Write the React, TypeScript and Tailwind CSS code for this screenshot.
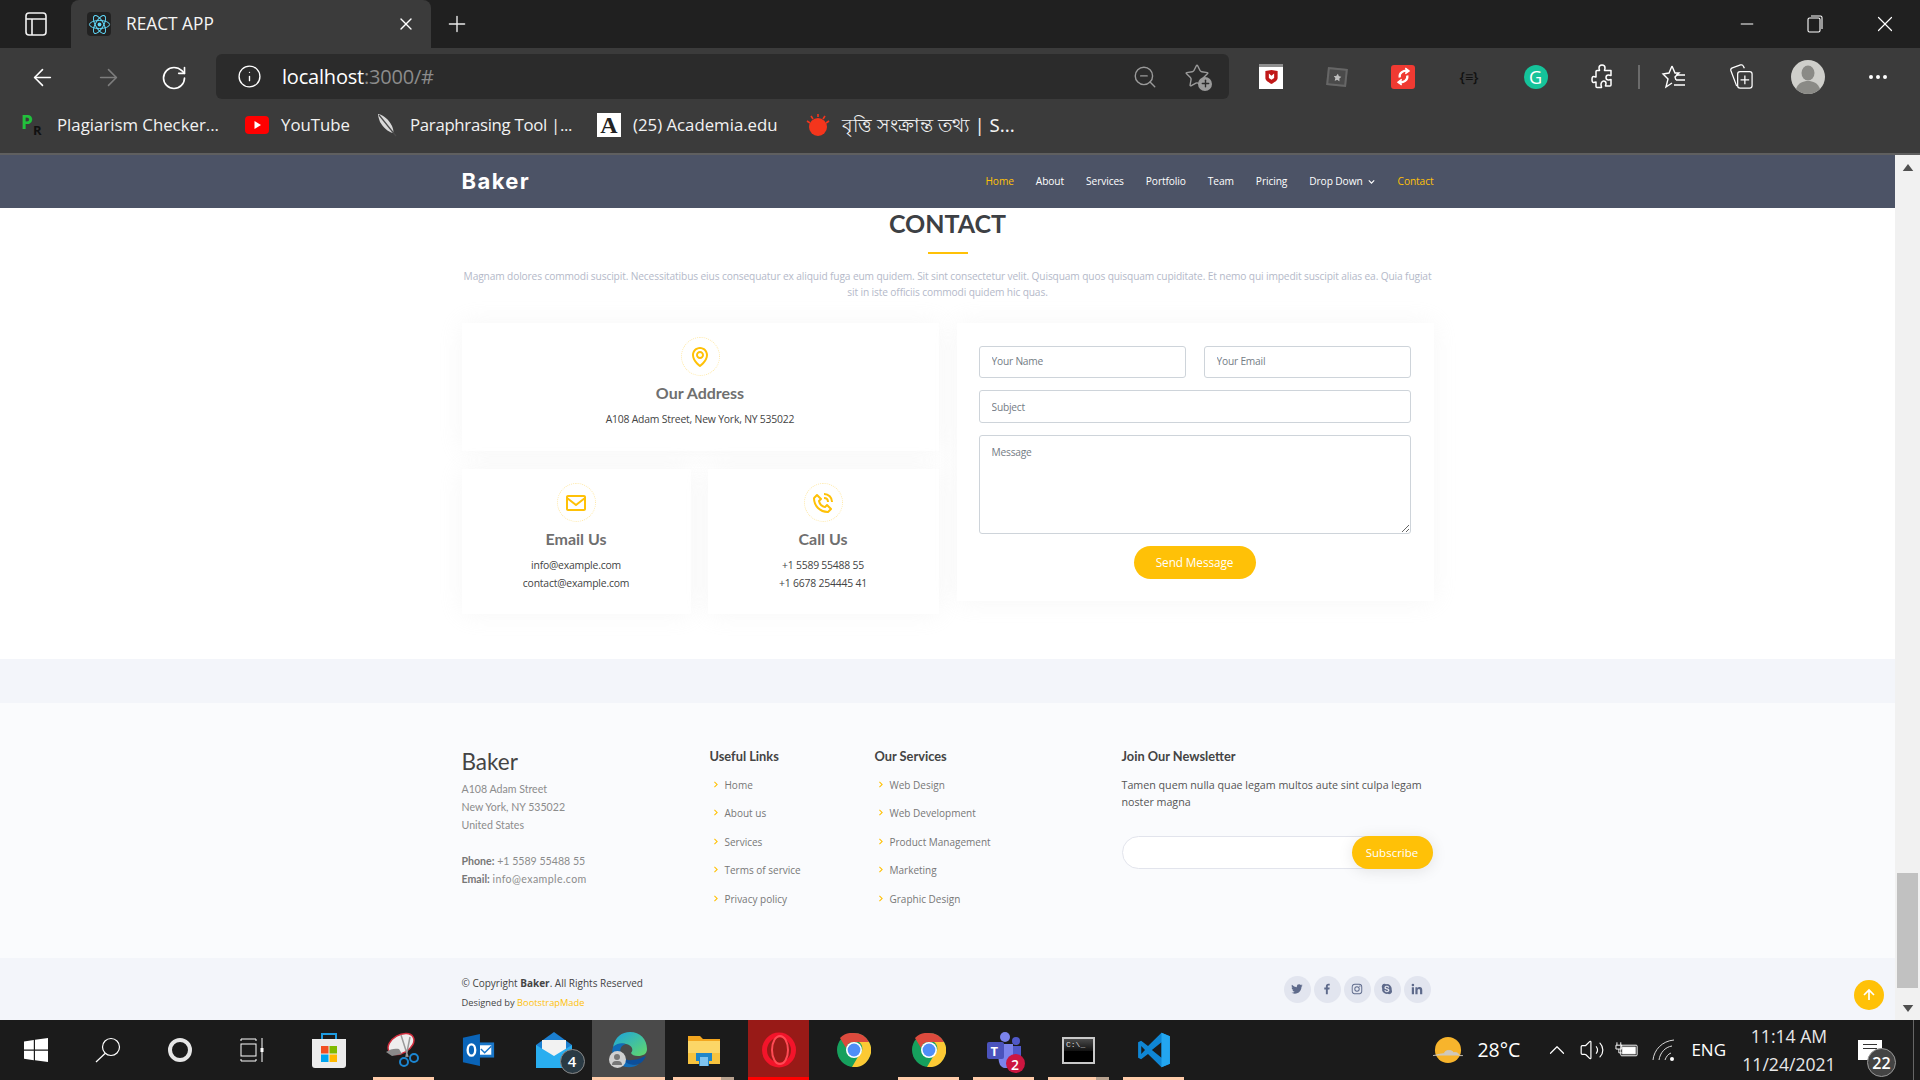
import {
  ArrowLeft,
  ArrowRight,
  ChevronUp,
  Ellipsis,
  Info,
  Minus,
  Plus,
  RotateCw,
  Star,
  Volume2,
  X,
  ZoomOut,
} from "lucide-react";
import {
  BiChevronDown,
  BiChevronRight,
  BiEnvelope,
  BiLogoFacebook,
  BiLogoInstagram,
  BiLogoLinkedin,
  BiLogoSkype,
  BiLogoTwitter,
  BiMap,
  BiPhoneCall,
  BiUpArrowAlt,
} from "react-icons/bi";
import type { ReactNode } from "react";

const navLinks = ["About", "Services", "Portfolio", "Team", "Pricing"];
const usefulLinks = ["Home", "About us", "Services", "Terms of service", "Privacy policy"];
const serviceLinks = ["Web Design", "Web Development", "Product Management", "Marketing", "Graphic Design"];

function ReactLogo() {
  return (
    <span className="grid h-[24px] w-[24px] place-items-center rounded-sm bg-[#222222]">
      <svg viewBox="-12 -12 24 24" className="h-[23px] w-[23px]" fill="none" stroke="#61dafb" strokeWidth="1">
        <circle r="2" fill="#61dafb" stroke="none" />
        <ellipse rx="10.5" ry="4.2" />
        <ellipse rx="10.5" ry="4.2" transform="rotate(60)" />
        <ellipse rx="10.5" ry="4.2" transform="rotate(120)" />
      </svg>
    </span>
  );
}

function TabStrip() {
  return (
    <div className="flex h-[48px] shrink-0 items-stretch bg-[#202020] text-white">
      <div className="grid w-[71px] place-items-center">
        <svg viewBox="0 0 22 24" className="h-[24px] w-[22px]" fill="none" stroke="#f2f2f2" strokeWidth="1.6">
          <rect x="1" y="1" width="20" height="22" rx="3" />
          <path d="M1 7h20M7 7v16" />
        </svg>
      </div>
      <div className="flex w-[360px] items-center rounded-t-lg bg-[#3b3b3b] pl-[16px] pr-[15px]">
        <ReactLogo />
        <span className="ml-[15px] text-[17.300px] text-[#f5f5f5]">REACT APP</span>
        <X className="ml-auto h-[20px] w-[20px]" strokeWidth={1.6} />
      </div>
      <div className="grid w-[52px] place-items-center">
        <Plus className="h-[26px] w-[26px] text-[#e8e8e8]" strokeWidth={1.3} />
      </div>
      <div className="ml-auto flex items-center pr-[22px]">
        <Minus className="mr-[50px] h-[20px] w-[20px]" strokeWidth={1.2} />
        <svg viewBox="0 0 16 18" className="mr-[49px] h-[18px] w-[16px]" fill="none" stroke="#fff" strokeWidth="1.1">
          <rect x="1" y="3" width="12" height="14" rx="1.5" />
          <path d="M4 1h9.5A1.5 1.5 0 0 1 15 2.500V14" />
        </svg>
        <X className="h-[26px] w-[26px]" strokeWidth={1.1} />
      </div>
    </div>
  );
}

function McAfeeIcon() {
  return (
    <span className="flex h-[25px] w-[24px] flex-col items-center bg-white">
      <span className="h-[3px] w-full bg-[#8e8e8e]" />
      <svg viewBox="0 0 14 16" className="mt-[3px] h-[14px] w-[13px]">
        <path d="M0 1l7-1 7 1v8c0 3-4 5-7 7-3-2-7-4-7-7z" fill="#c01818" />
        <path d="M4 4l3 2.500 3-2.500v5l-3 2-3-2z" fill="#fff" />
      </svg>
    </span>
  );
}

function RedSyncIcon() {
  return (
    <span className="grid h-[24px] w-[24px] place-items-center rounded-[3px] bg-[#f03a32]">
      <svg viewBox="0 0 16 20" className="h-[19px] w-[15px]" fill="none" stroke="#fff" strokeWidth="2.4">
        <path d="M13 4C8 3 3 6 4 11" />
        <path d="M3 16c5 1 10-2 9-7" />
        <path d="M10 1l4 3-4 3M6 19l-4-3 4-3" strokeWidth="1.4" fill="#fff" />
      </svg>
    </span>
  );
}

function PuzzleIcon() {
  return (
    <svg viewBox="0 0 22 26" className="h-[26px] w-[22px]" fill="none" stroke="#fff" strokeWidth="1.5" strokeLinejoin="round">
      <path d="M11 1c2 0 3 1.500 3 3 0 1-.5 1.500-.5 2.500H20v5c-1 0-1.500-.5-2.500-.5-1.500 0-2.500 1.200-2.500 2.500s1 2.500 2.500 2.500c1 0 1.500-.5 2.500-.5v5.500c0 .6-.4 1-1 1h-4.500c0-1 .5-1.500.5-2.500 0-1.500-1.200-2.500-2.500-2.500S10 19 10 20.500c0 1 .5 2 .5 3H6c-.6 0-1-.4-1-1v-4.500c-1 0-1.500.5-2.500.5C1.500 18.500 1 17 1 15.500S1.500 12.500 2.500 12.500c1 0 1.500.5 2.500.5V7.500c0-.6.4-1 1-1h2.500C8.500 5.500 8 5 8 4c0-1.500 1-3 3-3z" />
    </svg>
  );
}

function FavouritesIcon() {
  return (
    <svg viewBox="0 0 26 26" className="h-[26px] w-[26px]" fill="none" stroke="#fff" strokeWidth="1.4">
      <path d="M11 2l3 7h4l-4 4 1 3M11 2L8 9l-6 1 5 5-2 8 6-4" />
      <path d="M15 11h9M15 16h9M13 21h11" />
    </svg>
  );
}

function CollectionsIcon() {
  return (
    <svg viewBox="0 0 26 28" className="h-[27px] w-[25px]" fill="none" stroke="#fff" strokeWidth="1.3">
      <path d="M8 24L2 8c-.5-1.500 0-2.500 1.500-3L12 2c1.500-.5 2.500 0 3 1.500l1 2" />
      <rect x="9" y="9" width="15" height="17" rx="2.500" />
      <path d="M16.500 13v9M12 17.500h9" />
    </svg>
  );
}

function Avatar() {
  return (
    <svg viewBox="0 0 34 34" className="h-[34px] w-[34px]">
      <circle cx="17" cy="17" r="17" fill="#cfcfcb" />
      <ellipse cx="17" cy="13" rx="6.500" ry="7.500" fill="#8a8a86" />
      <path d="M5 29c2-6 7-8 12-8s10 2 12 8a17 17 0 0 1-24 0z" fill="#8a8a86" />
    </svg>
  );
}

function Toolbar() {
  return (
    <div className="flex h-[57px] shrink-0 items-start bg-[#3b3b3b] text-white">
      <div className="ml-[9px] flex h-[57px] items-start pt-[16px]">
        <div className="grid w-[66px] place-items-center">
          <ArrowLeft className="h-[27px] w-[27px]" strokeWidth={1.4} />
        </div>
        <div className="grid w-[66px] place-items-center">
          <ArrowRight className="h-[27px] w-[27px] text-[#7d7d7d]" strokeWidth={1.4} />
        </div>
        <div className="grid w-[66px] place-items-center">
          <RotateCw className="h-[28px] w-[28px]" strokeWidth={1.4} />
        </div>
      </div>
      <div className="ml-[9px] mt-[6px] flex h-[45px] w-[1013px] items-center rounded-md bg-[#2b2b2b] pl-[21px] pr-[17px]">
        <Info className="h-[25px] w-[25px]" strokeWidth={1.3} />
        <span className="ml-[20px] text-[20px] tracking-[-0.2px]">
          localhost<span className="text-[#8c8c8c]">:3000/#</span>
        </span>
        <ZoomOut className="ml-auto h-[26px] w-[26px] text-[#9a9a9a]" strokeWidth={1.3} />
        <span className="relative ml-[26px] h-[28px] w-[28px] text-[#9a9a9a]">
          <Star className="h-[26px] w-[26px]" strokeWidth={1.3} />
          <span className="absolute bottom-0 right-0 grid h-[14px] w-[14px] place-items-center rounded-full bg-[#9a9a9a]">
            <Plus className="h-[11px] w-[11px] text-[#2b2b2b]" strokeWidth={3} />
          </span>
        </span>
      </div>
      <div className="ml-[9px] flex h-[57px] items-center">
        <div className="grid w-[66px] place-items-center">
          <McAfeeIcon />
        </div>
        <div className="grid w-[66px] place-items-center">
          <span className="grid h-[18px] w-[20px] rotate-6 place-items-center border-2 border-[#666666] bg-[#4a4a4a] text-[#bdbdbd]">
            <Star className="h-[9px] w-[9px]" fill="currentColor" strokeWidth={0} />
          </span>
        </div>
        <div className="grid w-[66px] place-items-center">
          <RedSyncIcon />
        </div>
        <div className="grid w-[66px] place-items-center">
          <span className="text-[14px] font-semibold text-[#111111]">{"{≡}"}</span>
        </div>
        <div className="grid w-[67px] place-items-center">
          <span className="grid h-[24px] w-[24px] place-items-center rounded-full bg-[#15c39a] text-[18px] leading-none text-white">
            G
          </span>
        </div>
        <div className="grid w-[66px] place-items-center">
          <PuzzleIcon />
        </div>
        <div className="ml-[3px] h-[24px] w-[2px] bg-[#6b6b6b]" />
        <div className="grid w-[68px] place-items-center">
          <FavouritesIcon />
        </div>
        <div className="grid w-[66px] place-items-center">
          <CollectionsIcon />
        </div>
        <div className="grid w-[68px] place-items-center">
          <Avatar />
        </div>
        <div className="grid w-[72px] place-items-center">
          <Ellipsis className="h-[24px] w-[24px]" strokeWidth={2} />
        </div>
      </div>
    </div>
  );
}

function Bookmarks() {
  return (
    <div className="flex h-[48px] shrink-0 items-center bg-[#3b3b3b] pb-[8px] text-[16.800px] text-[#f2f2f2]">
      <span className="ml-[21px] flex h-[24px] w-[24px] items-end font-bold">
        <span className="self-start text-[19px] leading-[18px] text-[#22c03c]">P</span>
        <span className="text-[13px] leading-[13px] text-[#111111]">R</span>
      </span>
      <span className="ml-[12px] w-[188px] whitespace-nowrap">Plagiarism Checker...</span>
      <svg viewBox="0 0 24 18" className="h-[18px] w-[24px]">
        <rect width="24" height="18" rx="4" fill="#f00" />
        <path d="M9.500 5l6.500 4-6.500 4z" fill="#fff" />
      </svg>
      <span className="ml-[12px] w-[95px] whitespace-nowrap">YouTube</span>
      <svg viewBox="0 0 22 24" className="h-[24px] w-[22px]">
        <path d="M2 1c6 1 11 6 14 12 1 3 2 5 1 7-5-1-10-6-13-11C3 6 2 3 2 1z" fill="#d9d9d9" />
        <path d="M3 2l17 21" stroke="#4a4a4a" strokeWidth="1.200" />
      </svg>
      <span className="ml-[12px] w-[187px] whitespace-nowrap tracking-[-0.3px]">Paraphrasing Tool |...</span>
      <span className="grid h-[24px] w-[24px] place-items-center bg-white font-['Liberation_Serif',serif] text-[24px] font-bold leading-none text-[#222222]">
        A
      </span>
      <span className="ml-[12px] w-[173px] whitespace-nowrap">(25) Academia.edu</span>
      <svg viewBox="0 0 24 24" className="h-[24px] w-[24px]">
        <circle cx="12" cy="14" r="9" fill="#f4351c" />
        <path d="M12 1v3M5 3l2 3M19 3l-2 3M1 8l3 2M23 8l-3 2" stroke="#f4351c" strokeWidth="1.6" />
      </svg>
      <span className="ml-[12px] whitespace-nowrap font-['Noto_Sans','Noto_Sans_CJK_SC',sans-serif] text-[18.600px]">
        বৃত্তি সংক্রান্ত তথ্য | S...
      </span>
    </div>
  );
}

function ContactCard({
  icon,
  title,
  lines,
  className,
}: {
  icon: ReactNode;
  title: string;
  lines: string[];
  className: string;
}) {
  return (
    <div className={`flex flex-col items-center bg-white pt-[14px] shadow-[0_0_24px_0_rgba(214,215,216,0.2)] ${className}`}>
      <span className="grid h-[39px] w-[39px] place-items-center rounded-full border border-dotted border-[#ffe9a8] text-[24px] text-[#ffc107]">
        {icon}
      </span>
      <h3 className="mt-[7px] font-['Lato',sans-serif] text-[16px] font-bold leading-[20px] text-[#6f6f6f]">{title}</h3>
      <div className="mt-[7px] text-[10.400px] leading-[18px] tracking-[-0.2px] text-[#444444]">
        {lines.map((line) => (
          <p key={line} className="text-center">
            {line}
          </p>
        ))}
      </div>
    </div>
  );
}

function ContactSection() {
  const fieldClass =
    "w-full rounded-[3px] border border-[#ced4da] bg-white px-[12px] text-[10.200px] tracking-[-0.2px] text-[#444444] outline-none placeholder:text-[#747c85]";

  return (
    <section className="h-[451px] shrink-0 bg-white">
      <div className="mx-auto w-[972px]">
        <h2 className="text-center font-['Lato',sans-serif] text-[25px] font-bold leading-[31px] text-[#3d4044]">CONTACT</h2>
        <div className="mx-auto mt-[13px] h-[2px] w-[40px] bg-[#ffc107]" />
        <p className="mt-[14px] text-center text-[10.200px] leading-[16px] tracking-[-0.13px] text-[#b4b9c9]">
          Magnam dolores commodi suscipit. Necessitatibus eius consequatur ex aliquid fuga eum quidem. Sit sint consectetur
          velit. Quisquam quos quisquam cupiditate. Et nemo qui impedit suscipit alias ea. Quia fugiat sit in iste officiis
          commodi quidem hic quas.
        </p>
        <div className="mt-[23px] grid grid-cols-[477px_477px] gap-[18px]">
          <div className="flex flex-col gap-[18px]">
            <ContactCard
              icon={<BiMap />}
              title="Our Address"
              lines={["A108 Adam Street, New York, NY 535022"]}
              className="h-[128px]"
            />
            <div className="grid grid-cols-[229px_231px] gap-[17px]">
              <ContactCard
                icon={<BiEnvelope />}
                title="Email Us"
                lines={["info@example.com", "contact@example.com"]}
                className="h-[145px]"
              />
              <ContactCard
                icon={<BiPhoneCall />}
                title="Call Us"
                lines={["+1 5589 55488 55", "+1 6678 254445 41"]}
                className="h-[145px]"
              />
            </div>
          </div>
          <form className="flex h-[278px] flex-col gap-[12px] bg-white pl-[22px] pr-[23px] pt-[23px] shadow-[0_0_24px_0_rgba(214,215,216,0.2)]">
            <div className="grid grid-cols-[207px_207px] gap-[18px]">
              <input className={`${fieldClass} h-[32px] pb-[2px]`} placeholder="Your Name" />
              <input className={`${fieldClass} h-[32px] pb-[2px]`} placeholder="Your Email" />
            </div>
            <input className={`${fieldClass} h-[33px]`} placeholder="Subject" />
            <textarea className={`${fieldClass} h-[99px] py-[9px]`} placeholder="Message" />
            <button
              type="button"
              className="mx-auto h-[33px] w-[122px] rounded-full bg-[#ffc107] text-[11.800px] tracking-[-0.1px] text-white"
            >
              Send Message
            </button>
          </form>
        </div>
      </div>
    </section>
  );
}

function LinkColumn({ title, links }: { title: string; links: string[] }) {
  return (
    <div>
      <h4 className="font-['Lato',sans-serif] text-[12.800px] font-bold leading-[16px] text-[#444444]">{title}</h4>
      <ul className="mt-[7px]">
        {links.map((link) => (
          <li key={link} className="flex h-[28.500px] items-center text-[10px] text-[#777777]">
            <BiChevronRight className="-ml-[1px] -mt-[2px] mr-[3px] h-[13px] w-[13px] text-[#ffc107]" />
            {link}
          </li>
        ))}
      </ul>
    </div>
  );
}

function Footer() {
  return (
    <footer className="shrink-0">
      <div className="h-[44px] bg-[#f3f5fa]" />
      <div className="h-[255px] bg-[#fafbfd] pt-[45px]">
        <div className="mx-auto grid w-[972px] grid-cols-[248px_165px_247px_312px]">
          <div>
            <h3 className="font-['Lato',sans-serif] text-[22.500px] font-normal leading-[28px] text-[#444444]">Baker</h3>
            <div className="mt-[4px] font-['Lato',sans-serif] text-[10.600px] leading-[18px] text-[#8c8c8c]">
              <p>A108 Adam Street</p>
              <p>New York, NY 535022</p>
              <p>United States</p>
              <p className="mt-[18px]">
                <strong className="font-bold text-[#777777]">Phone:</strong> +1 5589 55488 55
              </p>
              <p>
                <strong className="font-bold text-[#777777]">Email:</strong>{" "}
                <span className="tracking-[0.4px]">info@example.com</span>
              </p>
            </div>
          </div>
          <LinkColumn title="Useful Links" links={usefulLinks} />
          <LinkColumn title="Our Services" links={serviceLinks} />
          <div>
            <h4 className="font-['Lato',sans-serif] text-[12.800px] font-bold leading-[16px] text-[#444444]">
              Join Our Newsletter
            </h4>
            <p className="mt-[13px] w-[310px] text-[10.700px] leading-[17px] text-[#555555]">
              Tamen quem nulla quae legam multos aute sint culpa legam noster magna
            </p>
            <div className="relative mt-[25px] h-[33px] w-[311px] rounded-full border border-[#e2e4ec] bg-white">
              <button
                type="button"
                className="absolute -right-px -top-px h-[33px] w-[81px] rounded-full bg-[#ffc107] text-[11.500px] text-white shadow-[0_2px_15px_rgba(0,0,0,0.1)]"
              >
                Subscribe
              </button>
            </div>
          </div>
        </div>
      </div>
      <div className="h-[62px] bg-[#f3f5fa]">
        <div className="mx-auto flex h-full w-[972px] items-center justify-between">
          <div className="pt-[8px] text-[#444444]">
            <p className="text-[10px] leading-[16px]">
              © Copyright <strong className="font-bold">Baker</strong>. All Rights Reserved
            </p>
            <p className="mt-[4px] text-[9.300px] leading-[16px]">
              Designed by <span className="text-[#ffc107]">BootstrapMade</span>
            </p>
          </div>
          <div className="mr-[3px] flex gap-[3px]">
            {[BiLogoTwitter, BiLogoFacebook, BiLogoInstagram, BiLogoSkype, BiLogoLinkedin].map((Icon, index) => (
              <span key={index} className="grid h-[27px] w-[27px] place-items-center rounded-full bg-[#e2e5ef] text-[14px] text-[#5e6a8b]">
                <Icon />
              </span>
            ))}
          </div>
        </div>
      </div>
    </footer>
  );
}

function PageScrollbar() {
  return (
    <div className="flex w-[25px] shrink-0 flex-col items-center bg-[#f1f1f1]">
      <svg viewBox="0 0 12 8" className="mt-[9px] h-[7px] w-[12px]">
        <path d="M6 0l6 8H0z" fill="#505050" />
      </svg>
      <div className="mt-auto h-[115px] w-[21px] bg-[#c1c1c1]" />
      <svg viewBox="0 0 12 8" className="mb-[8px] mt-[17px] h-[7px] w-[12px]">
        <path d="M0 0h12L6 8z" fill="#505050" />
      </svg>
    </div>
  );
}

function Page() {
  return (
    <div className="relative flex min-h-0 flex-1 overflow-hidden">
      <div className="flex min-w-0 flex-1 flex-col">
        <nav className="h-[53px] shrink-0 bg-[#4c5366]">
          <div className="mx-auto flex h-full w-[972px] items-center justify-between text-white">
            <span className="font-['Inter',sans-serif] text-[22px] font-bold tracking-[1.4px]">Baker</span>
            <ul className="flex items-center gap-[22px] text-[10.200px] tracking-[-0.1px]">
              <li className="text-[#ffc107]">Home</li>
              {navLinks.map((link) => (
                <li key={link}>{link}</li>
              ))}
              <li className="flex items-center">
                Drop Down
                <BiChevronDown className="ml-[2px] h-[13px] w-[13px]" />
              </li>
              <li className="-ml-[2px] text-[#ffc107]">Contact</li>
            </ul>
          </div>
        </nav>
        <ContactSection />
        <Footer />
      </div>
      <PageScrollbar />
      <button
        type="button"
        className="absolute bottom-[10px] right-[36px] grid h-[30px] w-[30px] place-items-center rounded-full bg-[#ffc107] text-[20px] text-white"
      >
        <BiUpArrowAlt />
      </button>
    </div>
  );
}

function ChromeIcon() {
  return (
    <svg viewBox="0 0 34 34" className="h-[34px] w-[34px]">
      <circle cx="17" cy="17" r="17" fill="#16a05d" />
      <path d="M17 0a17 17 0 0 1 15 9H17a8 8 0 0 0-8 6L3 5a17 17 0 0 1 14-5z" fill="#dc4a3d" />
      <path d="M32 9a17 17 0 0 1-17 25l7-12a8 8 0 0 0 0-13z" fill="#fcc934" />
      <circle cx="17" cy="17" r="8" fill="#fff" />
      <circle cx="17" cy="17" r="6.400" fill="#4f8ef7" />
    </svg>
  );
}

function Badge({ children, className }: { children: ReactNode; className: string }) {
  return <span className={`absolute grid place-items-center rounded-full font-semibold text-white ${className}`}>{children}</span>;
}

const peachBar = "inset-x-[7px] bg-[#ffccaa]";
const splitBar = "inset-x-[7px] bg-[linear-gradient(90deg,#ffccaa_78%,#b8a28f_78%)]";

const taskbarApps: { key: string; icon: ReactNode; bar?: string; active?: string }[] = [
  {
    key: "store",
    icon: (
      <svg viewBox="0 0 36 36" className="h-[36px] w-[36px]">
        <path d="M11 7V2h14v5" fill="none" stroke="#1e9be0" strokeWidth="2" />
        <path d="M1 7h34v26a3 3 0 0 1-3 3H4a3 3 0 0 1-3-3z" fill="#ececec" />
        <rect x="10" y="14" width="7.500" height="7.500" fill="#f25022" />
        <rect x="18.500" y="14" width="7.500" height="7.500" fill="#7fba00" />
        <rect x="10" y="22.500" width="7.500" height="7.500" fill="#00a4ef" />
        <rect x="18.500" y="22.500" width="7.500" height="7.500" fill="#ffb900" />
      </svg>
    ),
  },
  {
    key: "snip",
    bar: peachBar,
    icon: (
      <svg viewBox="0 0 36 36" className="h-[36px] w-[36px]">
        <ellipse cx="15" cy="12" rx="14" ry="9" transform="rotate(-30 15 12)" fill="#eeeeee" stroke="#d32f3f" strokeWidth="1.500" />
        <path d="M0 20c4-3 9-4 13-3l3 5-10 2z" fill="#8a8a8a" />
        <path d="M15 3l7 22M24 5l-4 20" stroke="#9a9a9a" strokeWidth="1.500" />
        <circle cx="18" cy="30" r="4" fill="none" stroke="#1c86d1" strokeWidth="2" />
        <circle cx="28" cy="26" r="4" fill="none" stroke="#1c86d1" strokeWidth="2" />
      </svg>
    ),
  },
  {
    key: "outlook",
    icon: (
      <svg viewBox="0 0 36 36" className="h-[36px] w-[34px]">
        <path d="M14 10h20v16H14z" fill="#1976c8" />
        <path d="M19 13h12v10H19z" fill="#fff" />
        <path d="M20 17l4 4 7-7" fill="none" stroke="#1976c8" strokeWidth="1.500" />
        <path d="M1 5l18-4v34L1 31z" fill="#0a64b8" />
        <ellipse cx="10" cy="18" rx="4" ry="6" fill="none" stroke="#fff" strokeWidth="2.500" />
      </svg>
    ),
  },
  {
    key: "mail",
    icon: (
      <span className="relative block h-[36px] w-[36px]">
        <svg viewBox="0 0 36 36" className="h-[36px] w-[36px]">
          <path d="M0 13L18 0l18 13v23H0z" fill="#1b7fd0" />
          <path d="M6 8h24v14L18 28 6 22z" fill="#f2f2f2" />
          <path d="M0 13l18 11 18-11v23H0z" fill="#29aef0" />
        </svg>
        <Badge className="-bottom-[6px] -right-[13px] h-[25px] w-[25px] border border-[#888888] bg-[#2a3a44] text-[15px]">4</Badge>
      </span>
    ),
  },
  {
    key: "edge",
    bar: "inset-x-px bg-[#ffccaa]",
    active: "inset-x-px bg-[#4a4a4a]",
    icon: (
      <span className="relative block h-[36px] w-[36px]">
        <svg viewBox="0 0 36 36" className="h-[36px] w-[36px]">
          <defs>
            <linearGradient id="edgeTop" x1="0" y1="0" x2="1" y2="1">
              <stop offset="0" stopColor="#1ba3e0" />
              <stop offset="1" stopColor="#63d968" />
            </linearGradient>
          </defs>
          <path d="M2 15C4 5 11 0 19 0c10 0 17 7 17 17 0 5-4 7-9 7-4 0-6-1-7-3 3-3 1-8-5-9C9 11 5 13 2 15z" fill="url(#edgeTop)" />
          <path d="M2 15c3-3 8-5 13-3-5 1-7 6-5 11 2 7 10 11 18 9-8 6-22 4-26-8-1-3-1-6 0-9z" fill="#116cb8" />
          <path d="M27 32c-6 2-14 0-17-9 3 4 7 6 11 5 6 0 10-3 14-4-2 4-4 7-8 8z" fill="#0c4f9b" />
        </svg>
        <span className="absolute -left-[2px] bottom-0 h-[17px] w-[17px] rounded-full bg-[#d0d0d0]">
          <span className="mx-auto mt-[3px] block h-[6px] w-[6px] rounded-full bg-[#777777]" />
          <span className="mx-auto mt-[1px] block h-[4px] w-[10px] rounded-t-full bg-[#777777]" />
        </span>
      </span>
    ),
  },
  {
    key: "explorer",
    bar: splitBar,
    icon: (
      <svg viewBox="0 0 34 34" className="h-[34px] w-[34px]">
        <path d="M1 3h12l3 3h17v5H1z" fill="#f3a61f" />
        <path d="M1 8h32v23H1z" fill="#fcd667" />
        <path d="M1 20h32v11H1z" fill="#f8c33e" />
        <path d="M9 20h16v8h-3v5H12v-5H9z" fill="#1f86c9" />
        <path d="M13 24h8v9h-8z" fill="#7fc4ef" />
      </svg>
    ),
  },
  {
    key: "opera",
    bar: "inset-x-[7px] bg-[#ff0000]",
    active: "inset-x-[7px] bg-[#981a17]",
    icon: (
      <svg viewBox="0 0 34 36" className="h-[36px] w-[34px]">
        <ellipse cx="17" cy="18" rx="14.500" ry="15" fill="none" stroke="#f3142a" strokeWidth="5" />
        <ellipse cx="18" cy="18" rx="8" ry="14" fill="none" stroke="#ff4b55" strokeWidth="2" />
      </svg>
    ),
  },
  { key: "chrome", icon: <ChromeIcon /> },
  { key: "chrome2", bar: peachBar, icon: <ChromeIcon /> },
  {
    key: "teams",
    bar: peachBar,
    icon: (
      <span className="relative block h-[36px] w-[36px]">
        <svg viewBox="0 0 36 36" className="h-[36px] w-[36px]">
          <circle cx="19" cy="5" r="5" fill="#7b83eb" />
          <circle cx="30" cy="9" r="4" fill="#5059c9" />
          <path d="M24 14h11v12a6 6 0 0 1-11 3z" fill="#5059c9" />
          <path d="M10 12h17v16a7 7 0 0 1-14 2z" fill="#7b83eb" />
          <rect x="1" y="10" width="17" height="17" rx="2" fill="#4b53bc" />
        </svg>
        <span className="absolute left-[5px] top-[12px] text-[13px] font-bold leading-[14px] text-white">T</span>
        <Badge className="-bottom-[5px] -right-[3px] h-[19px] w-[19px] bg-[#cc1640] text-[14px]">2</Badge>
      </span>
    ),
  },
  {
    key: "cmd",
    bar: splitBar,
    icon: (
      <span className="block h-[27px] w-[33px] overflow-hidden border-2 border-[#c9c9c9] bg-black">
        <span className="block h-[12px] bg-[linear-gradient(#4a4a4a,#111111)] pl-[2px] font-['Liberation_Mono',monospace] text-[8px] leading-[12px] text-[#dddddd]">
          C:\_
        </span>
      </span>
    ),
  },
  {
    key: "vscode",
    bar: peachBar,
    icon: (
      <svg viewBox="0 0 24 24" className="h-[36px] w-[36px]">
        <path fillRule="evenodd" d="M17 .5L8 9.300 3.400 5.800 1.400 6.800v10.400l2 1L8 14.700l9 8.800 5.600-2.300V2.800zM17 6.800v10.400L10.600 12zM3.500 9.300L6 12l-2.500 2.700z" fill="#0f86d4" />
        <path d="M17 .5l5.600 2.300v18.400L17 23.500z" fill="#23a6f0" />
      </svg>
    ),
  },
];

function Taskbar() {
  return (
    <div className="flex h-[60px] shrink-0 items-stretch bg-[#1b1b1b] text-white">
      <div className="grid w-[72px] place-items-center">
        <svg viewBox="0 0 24 24" className="h-[24px] w-[24px]" fill="#fff">
          <path d="M0 3.400l9.800-1.400v9.500H0zM11 1.800L24 0v11.500H11zM0 12.700h9.800v9.500L0 20.800zM11 12.700h13V24l-13-1.800z" />
        </svg>
      </div>
      <div className="grid w-[72px] place-items-center">
        <svg viewBox="0 0 26 26" className="h-[26px] w-[26px]" fill="none" stroke="#fff" strokeWidth="1.200">
          <circle cx="16" cy="10" r="8.500" />
          <path d="M10 16.500L1 25" />
        </svg>
      </div>
      <div className="grid w-[72px] place-items-center">
        <span className="h-[24px] w-[24px] rounded-full border-[4px] border-[#e6e6e6]" />
      </div>
      <div className="grid w-[72px] place-items-center">
        <svg viewBox="0 0 24 24" className="h-[24px] w-[24px]" fill="none" stroke="#fff" strokeWidth="1">
          <path d="M1 3V1h15v2M1 21v2h15v-2M22 0v10M22 14v10" />
          <rect x="1" y="6" width="15" height="12" />
          <rect x="21" y="10.500" width="2" height="3" fill="#fff" />
        </svg>
      </div>
      <div className="ml-[3px] flex">
        {taskbarApps.map((app) => (
          <div key={app.key} className="relative grid w-[75px] place-items-center">
            {app.active && <span className={`absolute inset-y-0 ${app.active}`} />}
            <span className="relative">{app.icon}</span>
            {app.bar && <span className={`absolute bottom-0 h-[3px] ${app.bar}`} />}
          </div>
        ))}
      </div>
      <div className="ml-auto flex items-center">
        <svg viewBox="0 0 34 30" className="h-[28px] w-[32px]">
          <circle cx="17" cy="15" r="14" fill="#f7b42c" />
          <path d="M1 21c6-1 8-2 12-2 0-4 8-5 10-1 3-1 6 1 6 3h4" fill="#cfc8bc" stroke="#cfc8bc" strokeWidth="1" />
        </svg>
        <span className="ml-[13px] text-[19.500px]">28°C</span>
        <ChevronUp className="ml-[24px] h-[26px] w-[26px]" strokeWidth={1.1} />
        <Volume2 className="ml-[9px] h-[26px] w-[26px]" strokeWidth={1.1} />
        <svg viewBox="0 0 26 18" className="ml-[10px] h-[18px] w-[25px]" fill="none" stroke="#fff" strokeWidth="1">
          <path d="M2 1v3M6 1v3M1 4h6v4H1zM4 8v4h3" />
          <rect x="6" y="4" width="17" height="11" rx="1" />
          <rect x="8" y="6" width="13" height="7" fill="#fff" />
        </svg>
        <svg viewBox="0 0 24 24" className="ml-[12px] h-[24px] w-[24px]" fill="none" stroke="#d8d8d8" strokeWidth="1">
          <path d="M1 22C2 12 10 3 22 2M7 22c1-7 6-13 13-14M13 22c1-3 3-6 6-7" />
          <circle cx="20" cy="21" r="2" fill="#fff" stroke="none" />
        </svg>
        <span className="ml-[15px] text-[17px]">ENG</span>
        <div className="ml-[13px] w-[100px] text-center text-[17.600px] leading-[28px] text-[#e8e8e8]">
          <p>11:14 AM</p>
          <p>11/24/2021</p>
        </div>
        <span className="relative ml-[19px] mr-[31px] h-[20px] w-[24px] bg-white">
          <span className="mx-auto mt-[4px] block h-[1px] w-[14px] bg-[#333333]" />
          <span className="mx-auto mt-[3px] block h-[1px] w-[14px] bg-[#333333]" />
          <Badge className="-bottom-[17px] -right-[14px] h-[29px] w-[29px] border border-[#999999] bg-[#444444] text-[16px]">22</Badge>
        </span>
        <span className="mr-[6px] h-full w-px bg-[#666666]" />
      </div>
    </div>
  );
}

export default function App() {
  return (
    <div className="flex h-screen w-screen flex-col overflow-hidden font-['Open_Sans',sans-serif]">
      <TabStrip />
      <Toolbar />
      <Bookmarks />
      <div className="h-[2px] shrink-0 bg-[#5f5f5f]" />
      <Page />
      <Taskbar />
    </div>
  );
}
